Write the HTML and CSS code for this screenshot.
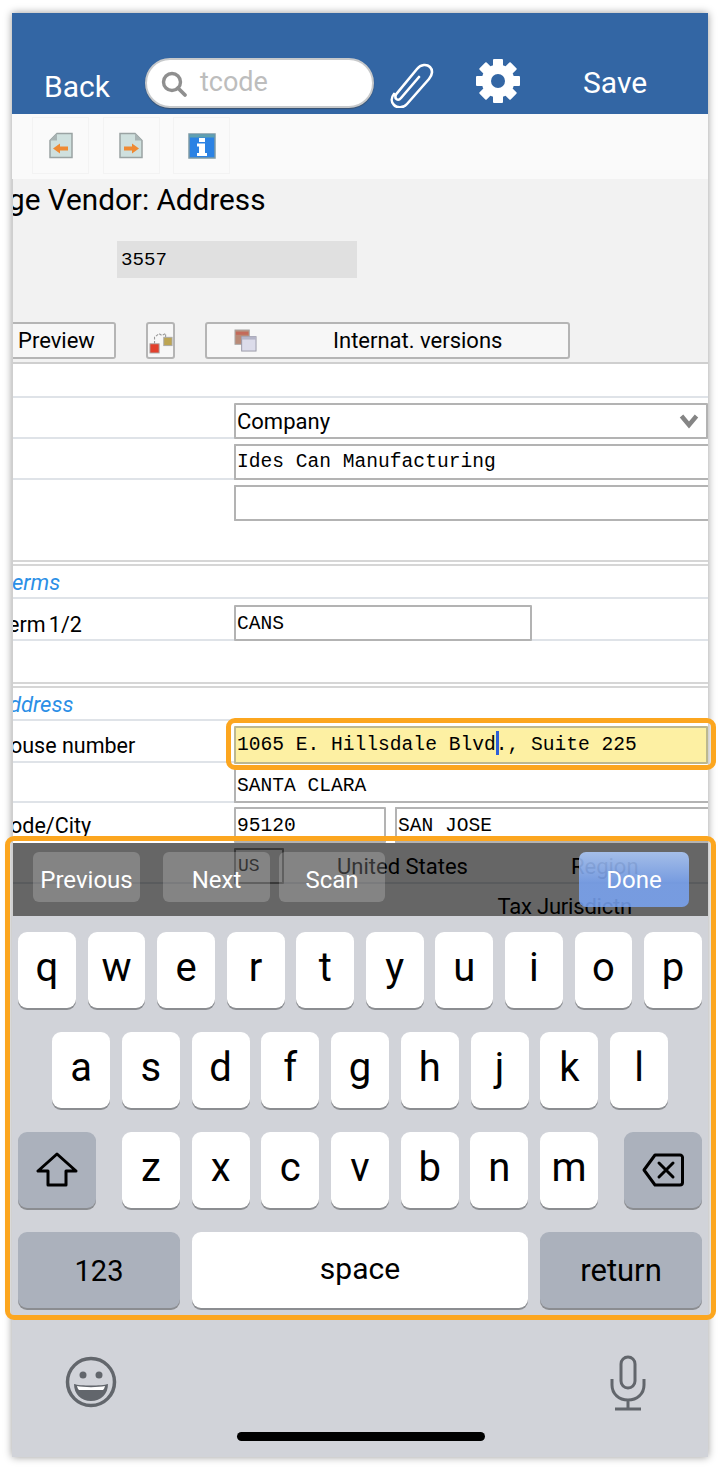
FILE: index.html
```html
<!DOCTYPE html>
<html lang="en">
<head>
<meta charset="utf-8">
<title>Change Vendor: Address</title>
<link rel="stylesheet" href="styles.css">
</head>
<body>
<div class="screen">
  <header class="nav">
    <span class="nav-back">Back</span>
    <div class="search">
      <svg class="search-icon" viewBox="0 0 28 28"><circle cx="12" cy="12" r="8.5" fill="none" stroke="#8f8f8f" stroke-width="3.4"/><path d="M18 18l7 7" stroke="#8f8f8f" stroke-width="3.8" stroke-linecap="round"/></svg>
      <span class="search-text">tcode</span>
    </div>
    <svg class="clip" viewBox="0 0 46 46"><path d="M29 15 11 36c-3 3.500-7 1-5-3.500L27 7c4-5 10-5 13-2s2.500 8-1 12L17 42c-4 4.500-10 4-13 1s-3-7.500 0-11" transform="translate(1 0)" fill="none" stroke="#fff" stroke-width="2.600" stroke-linecap="round"/></svg>
    <svg class="gear" viewBox="0 0 46 46"><g fill="#fff"><circle cx="23" cy="23" r="16.500"/><rect x="18" y="1" width="10" height="44" rx="1"/><rect x="18" y="1" width="10" height="44" rx="1" transform="rotate(45 23 23)"/><rect x="18" y="1" width="10" height="44" rx="1" transform="rotate(90 23 23)"/><rect x="18" y="1" width="10" height="44" rx="1" transform="rotate(135 23 23)"/></g><circle cx="23" cy="23" r="7" fill="#3366a4"/></svg>
    <span class="nav-save">Save</span>
  </header>

  <div class="toolbar">
    <div class="tool"><svg class="doc" viewBox="0 0 24 26"><path d="M8 1h15v24H1V8z" fill="#cfe0de" stroke="#9aa3a3" stroke-width="1.500"/><path d="M8 1v7H1z" fill="#a9b4b4"/><path d="M4 16l7-5v3h8v4h-8v3z" fill="#ef8a33"/></svg></div>
    <div class="tool"><svg class="doc" viewBox="0 0 24 26"><path d="M1 1h15l7 7v17H1z" fill="#cfe0de" stroke="#9aa3a3" stroke-width="1.500"/><path d="M16 1v7h7z" fill="#a9b4b4"/><path d="M20 16l-7-5v3H5v4h8v3z" fill="#ef8a33"/></svg></div>
    <div class="tool"><svg class="info" viewBox="0 0 28 26"><rect x="1" y="1" width="26" height="24" fill="#2b82e4" stroke="#7f9aa5" stroke-width="1.500"/><rect x="1.500" y="1.500" width="25" height="3" fill="#5fa0b0"/><rect x="11" y="5" width="6" height="4" fill="#fff"/><path d="M9 10.500h8V20h2v3H9v-3h2v-6.500H9z" fill="#fff"/></svg></div>
  </div>

  <div class="main">
    <section class="head">
      <h1 class="title">ge Vendor: Address</h1>
      <div class="vendor-row"><div class="vendor">3557</div></div>
      <div class="actions">
        <div class="btn btn-preview">Preview</div>
        <div class="btn btn-icon"><svg class="icon-sm" viewBox="0 0 26 30"><path d="M6 18v-7l5-4 3 2 4-2v4" fill="none" stroke="#999" stroke-width="1.200" stroke-dasharray="3 1.500"/><rect x="1" y="18" width="10" height="10" fill="#e2402c" stroke="#aaa"/><rect x="16" y="11" width="9" height="9" fill="#bda552" stroke="#aaa"/></svg></div>
        <div class="btn btn-intl"><svg class="icon-intl" viewBox="0 0 24 24"><rect x="1" y="1" width="15" height="15" fill="#b98a77" stroke="#aaa"/><rect x="2" y="3" width="13" height="3" fill="#c46a5a"/><rect x="8" y="8" width="15" height="15" fill="#dcdcea" stroke="#9a9aa8"/><rect x="8" y="8" width="15" height="3" fill="#b5b5c8"/></svg><span class="intl-text">Internat. versions</span></div>
      </div>
    </section>

    <section class="form">
      <div class="row row-blank"></div>
      <div class="row">
        <div class="field field-select"><span>Company</span><svg class="chev" viewBox="0 0 20 16"><path d="M2.500 3 10 12l7.500-9" fill="none" stroke="#858585" stroke-width="4.500"/></svg></div>
      </div>
      <div class="row"><div class="field field-wide mono">Ides Can Manufacturing</div></div>
      <div class="row row-tall"><div class="field field-wide mono"></div></div>

      <div class="section-head"><span class="section-text">erms</span></div>
      <div class="row row-terms">
        <span class="label cut-term">erm 1/2</span>
        <div class="field field-terms mono">CANS</div>
      </div>
      <div class="gap-block"></div>

      <div class="section-head"><span class="section-text cut-addr">ddress</span></div>
      <div class="row row-active">
        <span class="label cut-house">ouse number</span>
        <div class="field field-active mono">1065 E. Hillsdale Blvd<span class="caret"></span>., Suite 225</div>
      </div>
      <div class="row row-city"><div class="field field-city mono">SANTA CLARA</div></div>
      <div class="row row-plain">
        <span class="label cut-code">ode/City</span>
        <div class="field field-zip mono">95120</div>
        <div class="field field-town mono">SAN JOSE</div>
      </div>
      <div class="row row-country">
        <div class="field field-us mono tiny">US</div>
        <span class="country">United States</span>
        <span class="region">Region</span>
      </div>
      <div class="row-tax"><span class="tax">Tax Jurisdictn</span></div>
    </section>

    <div class="accessory">
      <div class="acc-group">
        <div class="acc-btn acc-prev">Previous</div>
        <div class="acc-btn acc-next">Next</div>
        <div class="acc-btn acc-scan">Scan</div>
      </div>
      <div class="acc-done">Done</div>
    </div>
  </div>

  <div class="keyboard">
    <div class="key-row">
      <div class="key">q</div><div class="key">w</div><div class="key">e</div><div class="key">r</div><div class="key">t</div><div class="key">y</div><div class="key">u</div><div class="key">i</div><div class="key">o</div><div class="key">p</div>
    </div>
    <div class="key-row key-row-mid">
      <div class="key">a</div><div class="key">s</div><div class="key">d</div><div class="key">f</div><div class="key">g</div><div class="key">h</div><div class="key">j</div><div class="key">k</div><div class="key">l</div>
    </div>
    <div class="key-row key-row-third">
      <div class="key key-fn key-shift"><svg class="ico-shift" viewBox="0 0 42 36"><path d="M21 2 2 19h10v14h18V19h10z" fill="none" stroke="#000" stroke-width="3" stroke-linejoin="round"/></svg></div>
      <div class="letters">
        <div class="key">z</div><div class="key">x</div><div class="key">c</div><div class="key">v</div><div class="key">b</div><div class="key">n</div><div class="key">m</div>
      </div>
      <div class="key key-fn key-shift"><svg class="ico-back" viewBox="0 0 42 34"><path d="M13 2h25a2.500 2.500 0 0 1 2.500 2.500v25A2.500 2.500 0 0 1 38 32H13L2 17z" fill="none" stroke="#000" stroke-width="3" stroke-linejoin="round"/><path d="M17 10l14 14M31 10 17 24" stroke="#000" stroke-width="3" stroke-linecap="round"/></svg></div>
    </div>
    <div class="key-row key-row-bottom">
      <div class="key key-fn key-wide text-key">123</div>
      <div class="key key-space text-key">space</div>
      <div class="key key-fn key-wide text-key key-return">return</div>
    </div>
    <div class="kb-extra">
      <svg class="emoji" viewBox="0 0 52 52"><circle cx="26" cy="26" r="23.500" fill="none" stroke="#62666c" stroke-width="3.500"/><circle cx="18" cy="19" r="3.500" fill="#62666c"/><circle cx="34" cy="19" r="3.500" fill="#62666c"/><path d="M9 28c6 2 28 2 34 0 0 10-7 17-17 17S9 38 9 28z" fill="#62666c"/><path d="M12 30c6 1.500 22 1.500 28 0-.5 2-1 3-2 4H14c-1-1-1.500-2-2-4z" fill="#fff"/></svg>
      <svg class="mic" viewBox="0 0 38 56"><rect x="12" y="2" width="14" height="31" rx="7" fill="none" stroke="#62666c" stroke-width="3"/><path d="M3 24v6c0 9 7 15 16 15s16-6 16-15v-6M19 45v8M6 54h26" fill="none" stroke="#62666c" stroke-width="3"/></svg>
    </div>
    <div class="home-bar"></div>
  </div>

  <div class="frame frame-field"></div>
  <div class="frame frame-kb"></div>
</div>
</body>
</html>
```
FILE: styles.css
```css
* { box-sizing: border-box; }
html, body { margin: 0; padding: 0; background: #fff; }
body { width: 720px; height: 1468px; overflow: hidden; font-family: Roboto, "Liberation Sans", sans-serif; color: #000; }

.screen {
  position: relative;
  width: 696px;
  height: 1444px;
  margin: 13px 0 0 12px;
  display: flex;
  flex-direction: column;
  box-shadow: 0 0 8px rgba(0,0,0,.4);
  background: #fff;
}

.nav {
  height: 101px;
  flex: none;
  background: #3366a4;
  display: flex;
  align-items: flex-start;
  padding-left: 32px;
  color: #fff;
  font-size: 30px;
}
.nav-back { margin-top: 56px; width: 101px; }
.search {
  width: 229px;
  height: 50px;
  margin-top: 45px;
  border-radius: 25px;
  background: #fff;
  border: 2px solid #c7c9cb;
  box-shadow: 0 1px 1px rgba(60,60,60,.5);
  display: flex;
  align-items: center;
  padding-left: 13px;
}
.search-icon { width: 28px; height: 28px; margin-top: 2px; }
.search-text { color: #bdbdbd; font-size: 27px; margin-left: 12px; margin-top: -3px; }
.clip { width: 46px; height: 46px; margin: 49px 0 0 15px; }
.gear { width: 46px; height: 46px; margin: 45px 0 0 40px; }
.nav-save { margin: 52px 0 0 62px; }

.toolbar {
  height: 65px;
  flex: none;
  background: #fafafa;
  display: flex;
  align-items: flex-start;
  gap: 13.500px;
  padding: 3px 0 0 20px;
}
.tool {
  width: 57px;
  height: 57px;
  border: 1px solid #f3f3f3;
  display: flex;
  align-items: center;
  justify-content: center;
}
.doc { width: 24px; height: 27px; }
.info { width: 28px; height: 26px; }

.main { position: relative; flex: none; height: 737px; overflow: hidden; background: #fff; }
.main::after { content: ""; position: absolute; left: 0; top: 0; bottom: 0; width: 1px; background: #cfcfcf; z-index: 3; }

.head { height: 183px; background: #f2f2f2; overflow: hidden; }
.title { margin: 0; font-size: 29.700px; font-weight: 400; line-height: 34px; padding-top: 4px; margin-left: -4px; }
.vendor-row { padding: 24px 0 0 105px; }
.vendor {
  width: 240px;
  height: 37px;
  background: #e0e0e0;
  font-family: "Liberation Mono", monospace;
  font-size: 19.200px;
  line-height: 38px;
  padding-left: 4px;
}
.actions { display: flex; margin-top: 44px; }
.btn {
  height: 37px;
  background: #f7f7f7;
  border: 2px solid #b5b5b5;
  border-radius: 3px;
  display: flex;
  align-items: center;
  font-size: 22px;
  line-height: 36px;
}
.btn-preview { width: 105px; margin-left: -1px; padding-left: 7px; border-left: 0; border-radius: 0 3px 3px 0; }
.btn-icon { width: 29px; margin-left: 30px; justify-content: center; }
.icon-sm { width: 24px; height: 28px; }
.btn-intl { width: 365px; margin-left: 30px; position: relative; }
.icon-intl { width: 23px; height: 23px; margin-left: 27px; }
.intl-text { margin-left: 76px; }

.form { border-top: 2px solid #cfcfcf; }
.row {
  display: flex;
  height: 41px;
  border-bottom: 2px solid #dfe3e8;
  padding-left: 222px;
  position: relative;
  align-items: flex-start;
}
.row-blank { height: 34px; }
.row-tall { height: 81px; border-bottom: 0; }
.row-terms { height: 42px; }
.row-active { height: 42px; }
.row-city { height: 40px; }
.row-plain { height: 40px; border-bottom: 0; }
.row-country { height: 41px; border-bottom: 2px solid #dfe3e8; }

.label { position: absolute; left: -2px; top: 10px; font-size: 21.500px; line-height: 28px; white-space: nowrap; }
.cut-house { top: 11px; }
.cut-term { left: -4px; top: 12px; word-spacing: -2px; }
.cut-code { left: -2px; top: 9px; }

.field {
  height: 36px;
  margin-top: 5px;
  background: #fff;
  border: 2px solid #b3b3b3;
  border-radius: 1px;
  padding-left: 2px;
  font-size: 22px;
  line-height: 33px;
  white-space: nowrap;
  position: relative;
  z-index: 1;
  flex: none;
}
.mono { font-family: "Liberation Mono", monospace; font-size: 19.600px; padding-left: 1px; }
.tiny { font-size: 18px; padding-left: 2px; }
.field-select { width: 474px; display: flex; justify-content: space-between; align-items: center; padding: 0 7px 0 1px; }
.field-wide { width: 480px; border-right: 0; }
.field-city { width: 480px; height: 37px; margin-top: 3px; border-right: 0; line-height: 36px; }
.field-terms { width: 298px; margin-top: 6px; line-height: 35px; }
.field-active { width: 474px; height: 38px; margin-top: 5px; background: #fdf0a3; line-height: 35px; border-color: #bcb88f; }
.field-zip { width: 152px; margin-top: 4px; line-height: 35px; }
.field-town { width: 320px; margin: 4px 0 0 9px; border-right: 0; line-height: 35px; }
.field-us { width: 50px; color: #000; border-color: #8f8f8f; }
.chev { width: 20px; height: 16px; }
.caret { display: inline-block; width: 3px; height: 24px; background: #2e5fd8; vertical-align: -5px; margin: 0 -3px 0 0; }

.section-head {
  height: 35px;
  border-top: 2px solid #d6d6d6;
  border-bottom: 2px solid #dfe3e8;
  box-shadow: 0 -2px 0 #fff, 0 -4px 0 #d6d6d6;
  margin-top: 3px;
  overflow: hidden;
}
.section-text { display: block; color: #2b8fe6; font-style: italic; font-size: 22px; line-height: 33px; }
.cut-addr { margin-left: -3px; }
.gap-block { height: 42px; }

.country { font-size: 22px; margin: 11px 0 0 53px; line-height: 26px; }
.region { font-size: 22px; margin: 11px 0 0 103px; line-height: 26px; }
.row-tax { text-align: right; padding: 10px 76px 0 0; font-size: 22px; line-height: 26px; height: 40px; letter-spacing: -.2px; }
.tax { display: inline-block; }

.accessory {
  position: absolute;
  left: 0;
  right: 0;
  top: 664px;
  height: 73px;
  background: rgba(0,0,0,.6);
  z-index: 2;
  display: flex;
  justify-content: space-between;
  padding: 9px 19px 0 21px;
  color: #fff;
  font-size: 24px;
}

.keyboard {
  position: relative;
  flex: 1;
  background: #d1d3d9;
  padding: 16px 6px 0;
  display: flex;
  flex-direction: column;
}
.key-row { display: flex; gap: 11.700px; height: 78px; margin-bottom: 22px; }
.key-row-mid { padding: 0 34px; }
.key-row-third { justify-content: space-between; gap: 26px; }
.letters { display: flex; gap: 11.700px; flex: 1; }
.key {
  flex: 1;
  height: 76px;
  background: #fff;
  border-radius: 9px;
  box-shadow: 0 2px 0 #8b8d91;
  font-size: 40px;
  line-height: 72px;
  text-align: center;
}
.key-fn { background: #abb1bc; }
.key-shift { flex: none; width: 78px; display: flex; align-items: center; justify-content: center; }
.key-row-bottom .key-wide { flex: none; width: 162px; }
.key-space { flex: 1; }
.text-key { font-size: 29px; line-height: 78px; }
.key-space.text-key { font-size: 30px; line-height: 74px; }
.key-return.text-key { font-size: 31px; }
.ico-shift { width: 42px; height: 36px; }
.ico-back { width: 42px; height: 34px; }
.kb-extra { display: flex; justify-content: space-between; align-items: flex-start; padding: 23px 55px 0 48px; }
.emoji { width: 52px; height: 52px; margin: 1px 0 0 -1px; }
.mic { width: 38px; height: 56px; }
.home-bar { position: absolute; left: 225px; bottom: 16px; width: 248px; height: 9px; background: #000; border-radius: 5px; }

.acc-group { display: flex; }
.acc-btn {
  height: 50px;
  line-height: 56px;
  background: rgba(255,255,255,.2);
  border-radius: 6px;
  text-align: center;
}
.acc-prev { width: 107px; }
.acc-next { width: 107px; margin-left: 23px; }
.acc-scan { width: 106px; margin-left: 9px; }
.acc-done {
  width: 110px;
  height: 55px;
  line-height: 56px;
  text-align: center;
  border-radius: 7px;
  background: linear-gradient(rgba(175,205,255,.85), rgba(122,165,245,.85) 55%);
}

.frame { position: absolute; border: 5px solid #fca61f; z-index: 5; pointer-events: none; }
.frame-field { left: 214px; top: 705px; width: 490px; height: 52px; border-radius: 9px; }
.frame-kb { left: -7px; top: 823px; width: 711px; height: 484px; border-radius: 9px; }
```
